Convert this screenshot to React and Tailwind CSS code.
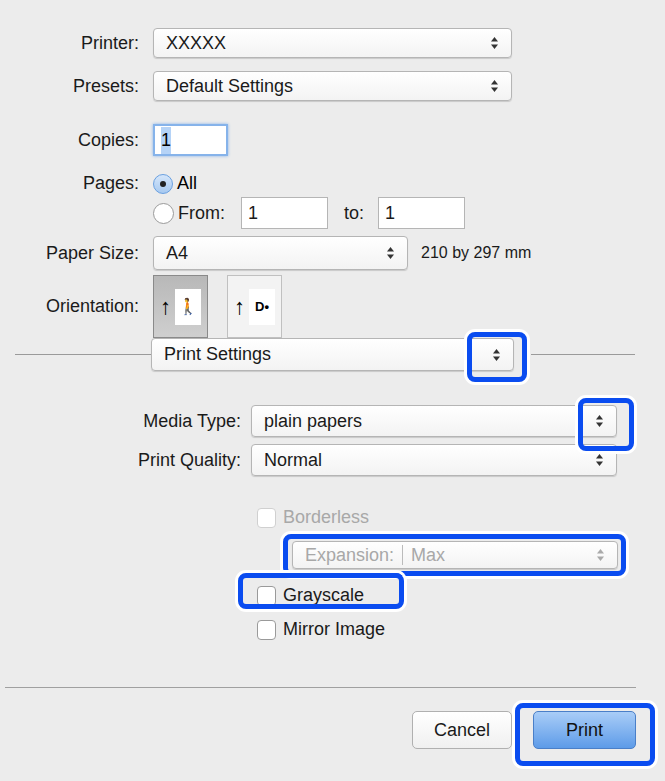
const font = { fontFamily: '"Liberation Sans", Arial, sans-serif' }

function Arrows({ dim }) {
  return (
    <svg width="9" height="16" viewBox="0 0 9 16" className={dim ? "opacity-40" : ""}>
      <path d="M4.5 2 L8 6.5 H1 Z" fill="#333" />
      <path d="M4.5 14 L8 9.5 H1 Z" fill="#333" />
    </svg>
  )
}

function Popup({ w, h = "h-[30px]", children, dim, className = "" }) {
  return (
    <div className={`${w} ${h} ${className} flex items-center justify-between rounded-[4px] border border-[#b5b5b5] bg-gradient-to-b from-white to-[#f3f3f3] shadow-[0_1px_1px_rgba(0,0,0,0.15)] pl-3 pr-3 text-[18px] ${dim ? "text-[#a8a8a8]" : "text-[#1a1a1a]"}`}>
      <span className="flex items-center">{children}</span>
      <Arrows dim={dim} />
    </div>
  )
}

function Hl({ className }) {
  return <div className={`pointer-events-none absolute rounded-[8px] border-[5px] border-[#0a4cf0] shadow-[0_0_0_3px_white] ${className}`} />
}

function Row({ label, children, className = "" }) {
  return (
    <div className={`flex items-center ${className}`}>
      <div className="w-[143px] pr-1 text-right text-[18px] text-[#1a1a1a]">{label}</div>
      <div className="ml-[10px] flex items-center">{children}</div>
    </div>
  )
}

function Box({ dim }) {
  return <div className={`h-[20px] w-[19px] rounded-[4px] border bg-white ${dim ? "border-[#d0d0d0]" : "border-[#9a9a9a]"}`} />
}

export default function App() {
  return (
    <div style={font} className="relative h-[781px] w-[665px] bg-[#ececec] pt-[28px]">
      <Row label="Printer:"><Popup w="w-[359px]">XXXXX</Popup></Row>
      <Row label="Presets:" className="mt-[13px]"><Popup w="w-[359px]">Default Settings</Popup></Row>
      <Row label="Copies:" className="mt-[23px]">
        <div className="flex h-[32px] w-[75px] items-center border-2 border-[#86b3ea] bg-white pl-[6px] text-[18px] shadow-[0_0_3px_#86b3ea]">
          <span className="bg-[#b5d3f7]">1</span>
        </div>
      </Row>
      <Row label="Pages:" className="mt-[14px]">
        <div className="flex items-center gap-1 text-[18px]">
          <div className="flex h-[20px] w-[20px] items-center justify-center rounded-full border border-[#6aa0e0] bg-gradient-to-b from-[#d5e6fa] to-[#a7c9f0]">
            <div className="h-[6px] w-[6px] rounded-full bg-[#222]" />
          </div>
          All
        </div>
      </Row>
      <div className="ml-[153px] flex items-center text-[18px] text-[#1a1a1a]">
        <div className="h-[21px] w-[21px] rounded-full border border-[#9a9a9a] bg-white" />
        <span className="ml-1">From:</span>
        <div className="ml-[16px] flex h-[32px] w-[87px] items-center border border-[#b5b5b5] bg-white pl-[6px]">1</div>
        <span className="ml-[16px]">to:</span>
        <div className="ml-[14px] flex h-[32px] w-[87px] items-center border border-[#b5b5b5] bg-white pl-[6px]">1</div>
      </div>
      <Row label="Paper Size:" className="mt-[7px]">
        <Popup w="w-[255px]" h="h-[34px]">A4</Popup>
        <span className="ml-[13px] text-[16px] text-[#1a1a1a]">210 by 297 mm</span>
      </Row>
      <Row label="Orientation:" className="mt-[5px]">
        <div className="flex h-[63px] w-[55px] items-center justify-center gap-1 border border-[#8a8a8a] bg-gradient-to-b from-[#b8b8b8] to-[#cfcfcf]">
          <span className="text-[22px] leading-none">↑</span>
          <div className="flex h-[36px] w-[26px] items-center justify-center bg-white text-[16px]">🚶</div>
        </div>
        <div className="ml-[19px] flex h-[63px] w-[55px] items-center justify-center gap-1 border border-[#c0c0c0] bg-[#f3f3f3]">
          <span className="text-[22px] leading-none">↑</span>
          <div className="flex h-[36px] w-[26px] items-center justify-center bg-white text-[13px] font-bold">D•</div>
        </div>
      </Row>
      <div className="flex items-center">
        <div className="ml-[15px] h-px w-[136px] bg-[#9a9a9a]" />
        <div className="relative">
          <Popup w="w-[363px]" h="h-[33px]">Print Settings</Popup>
          <Hl className="left-[316px] top-[-6px] h-[50px] w-[60px]" />
        </div>
        <div className="ml-[17px] h-px w-[104px] bg-[#9a9a9a]" />
      </div>
      <div className="mt-[34px] flex items-center">
        <div className="w-[245px] pr-1 text-right text-[18px] text-[#1a1a1a]">Media Type:</div>
        <div className="relative ml-[6px]">
          <Popup w="w-[366px]" h="h-[32px]">plain papers</Popup>
          <Hl className="left-[327px] top-[-7px] h-[53px] w-[56px]" />
        </div>
      </div>
      <div className="mt-[7px] flex items-center">
        <div className="w-[245px] pr-1 text-right text-[18px] text-[#1a1a1a]">Print Quality:</div>
        <Popup w="w-[366px]" h="h-[32px]" className="ml-[6px]">Normal</Popup>
      </div>
      <div className="ml-[257px] mt-[28px] flex items-center gap-[7px] text-[18px] text-[#a8a8a8]">
        <Box dim />Borderless
      </div>
      <div className="relative ml-[292px] mt-[10px] w-fit">
        <Popup w="w-[326px]" h="h-[28px]" dim>
          Expansion:<span className="mx-2 h-[20px] w-px bg-[#bbb]" />Max
        </Popup>
        <Hl className="left-[-9px] top-[-7px] h-[42px] w-[343px]" />
      </div>
      <div className="relative ml-[257px] mt-[13px] flex w-fit items-center gap-[7px] text-[18px] text-[#1a1a1a]">
        <Box />Grayscale
        <Hl className="left-[-19px] top-[-9px] h-[36px] w-[166px]" />
      </div>
      <div className="ml-[257px] mt-[7px] flex items-center gap-[7px] text-[18px] text-[#1a1a1a]">
        <Box />Mirror Image
      </div>
      <div className="ml-[5px] mt-[44px] h-px w-[631px] bg-[#a0a0a0]" />
      <div className="mt-[23px] flex items-center">
        <div className="ml-[412px] flex h-[38px] w-[100px] items-center justify-center rounded-[5px] border border-[#b0b0b0] bg-gradient-to-b from-white to-[#f0f0f0] text-[18px] text-[#1a1a1a]">Cancel</div>
        <div className="relative ml-[21px]">
          <div className="flex h-[38px] w-[103px] items-center justify-center rounded-[5px] border border-[#4a7fc8] bg-gradient-to-b from-[#a9cdf7] to-[#5d9be8] text-[18px] text-[#111]">Print</div>
          <Hl className="left-[-18px] top-[-8px] h-[63px] w-[140px]" />
        </div>
      </div>
    </div>
  )
}
